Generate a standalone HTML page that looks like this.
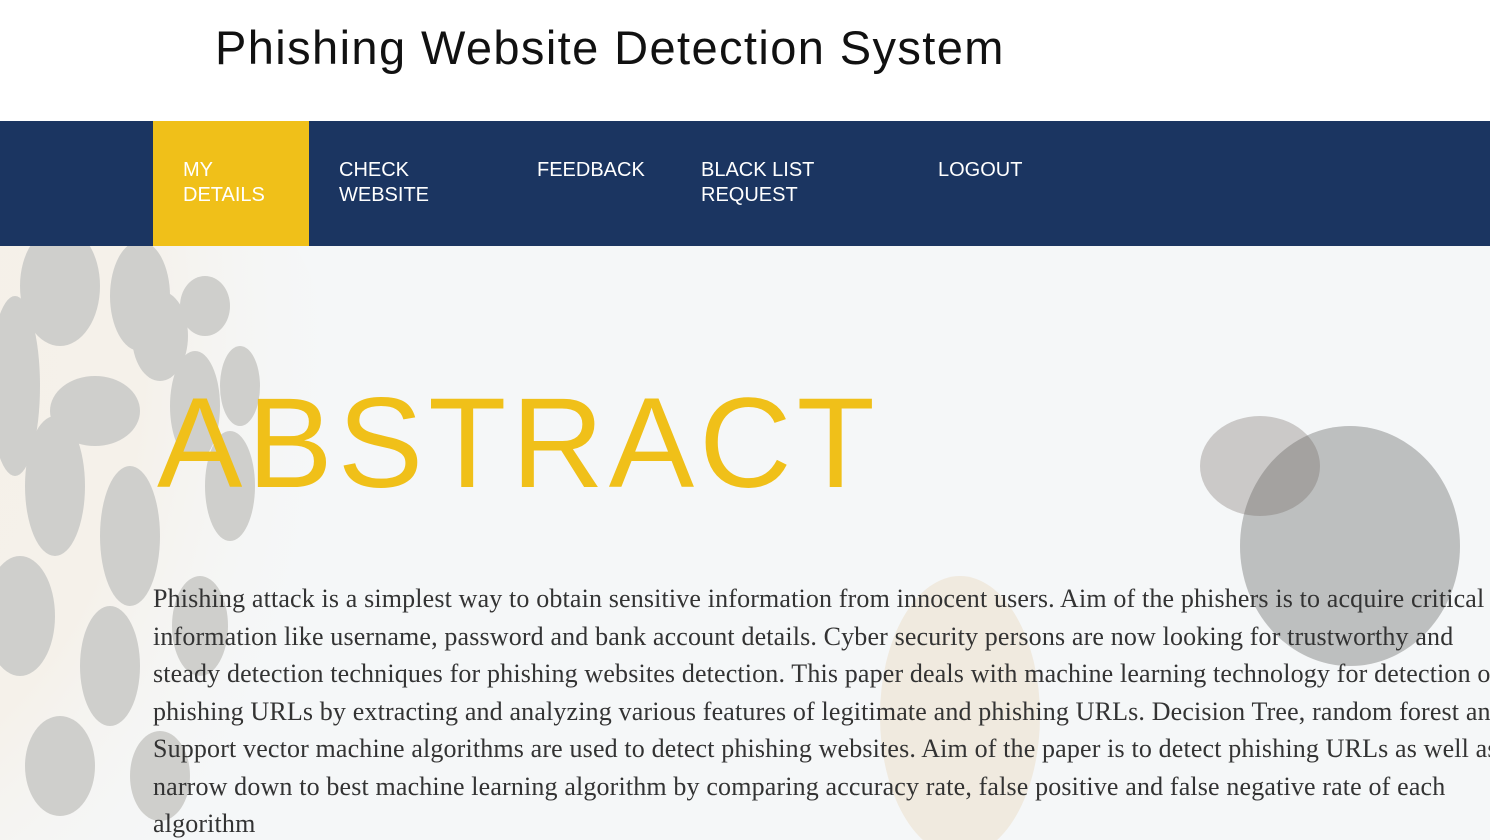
<!DOCTYPE html>
<html><head><meta charset="utf-8"><style>
*{margin:0;padding:0;box-sizing:border-box}
html,body{width:1490px;height:840px;overflow:hidden}
body{background:#f5f7f8;font-family:"Liberation Sans",sans-serif;position:relative}
.hdr{height:121px;background:#fff;position:relative}
.hdr h1{position:absolute;left:215px;top:20px;font-weight:400;font-size:47px;color:#111;letter-spacing:1.4px}
nav{position:absolute;top:121px;left:0;width:1490px;height:125px;background:#1b3561}
nav div{position:absolute;top:37px;color:#fff;font-size:20px;line-height:25px}
.act{left:153px!important;top:0!important;width:156px;height:125px;background:#f0c019;padding:37px 0 0 30px}
.bg{position:absolute;top:246px;left:0;width:1490px;height:594px}
h2{position:absolute;left:157px;top:370px;font-size:128px;line-height:148px;font-weight:400;color:#f0c019;letter-spacing:5px;white-space:nowrap}
p{position:absolute;left:153px;top:580px;width:1400px;font-family:"Liberation Serif",serif;font-size:26px;line-height:37.5px;color:#333;white-space:nowrap;letter-spacing:0.15px}
</style></head><body>
<div class="hdr"><h1>Phishing Website Detection System</h1></div>
<nav>
<div class="act">MY<br>DETAILS</div>
<div style="left:339px">CHECK<br>WEBSITE</div>
<div style="left:537px">FEEDBACK</div>
<div style="left:701px">BLACK LIST<br>REQUEST</div>
<div style="left:938px">LOGOUT</div>
</nav>
<svg class="bg" viewBox="0 0 1490 594">
<defs><radialGradient id="g" cx="0.1" cy="0.3" r="0.9"><stop offset="0" stop-color="#f5f0e8"/><stop offset="0.6" stop-color="#f5f1ea"/><stop offset="1" stop-color="#f5f7f8" stop-opacity="0"/></radialGradient></defs>
<ellipse cx="60" cy="260" rx="300" ry="420" fill="url(#g)"/>
<g fill="#cfcfcc">
<ellipse cx="60" cy="40" rx="40" ry="60"/><ellipse cx="140" cy="50" rx="30" ry="55"/>
<ellipse cx="160" cy="90" rx="28" ry="45"/><ellipse cx="205" cy="60" rx="25" ry="30"/>
<ellipse cx="15" cy="140" rx="25" ry="90"/><ellipse cx="95" cy="165" rx="45" ry="35"/>
<ellipse cx="195" cy="160" rx="25" ry="55"/><ellipse cx="240" cy="140" rx="20" ry="40"/>
<ellipse cx="55" cy="240" rx="30" ry="70"/><ellipse cx="130" cy="290" rx="30" ry="70"/>
<ellipse cx="230" cy="240" rx="25" ry="55"/><ellipse cx="20" cy="370" rx="35" ry="60"/>
<ellipse cx="110" cy="420" rx="30" ry="60"/><ellipse cx="200" cy="380" rx="28" ry="50"/>
<ellipse cx="60" cy="520" rx="35" ry="50"/><ellipse cx="160" cy="530" rx="30" ry="45"/>
</g>
<ellipse cx="1350" cy="300" rx="110" ry="120" fill="#555" opacity="0.35"/>
<ellipse cx="1260" cy="220" rx="60" ry="50" fill="#6a6058" opacity="0.3"/>
<ellipse cx="960" cy="470" rx="80" ry="140" fill="#ead9c2" opacity="0.45"/>
</svg>
<h2>ABSTRACT</h2>
<p>Phishing attack is a simplest way to obtain sensitive information from innocent users. Aim of the phishers is to acquire critical<br>information like username, password and bank account details. Cyber security persons are now looking for trustworthy and<br>steady detection techniques for phishing websites detection. This paper deals with machine learning technology for detection of<br>phishing URLs by extracting and analyzing various features of legitimate and phishing URLs. Decision Tree, random forest and<br>Support vector machine algorithms are used to detect phishing websites. Aim of the paper is to detect phishing URLs as well as<br>narrow down to best machine learning algorithm by comparing accuracy rate, false positive and false negative rate of each<br>algorithm</p>
</body></html>
